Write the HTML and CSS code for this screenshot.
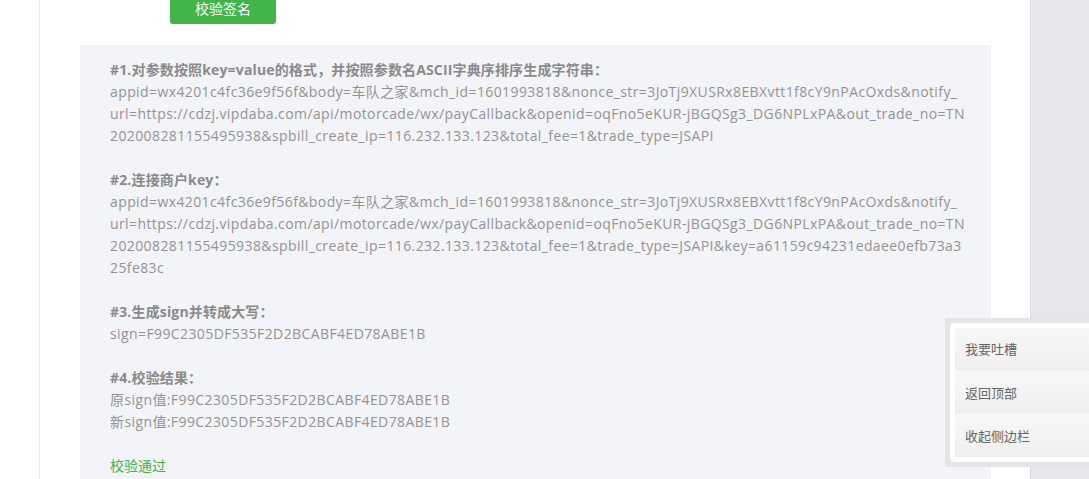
FILE: index.html
```html
<!DOCTYPE html>
<html lang="zh-CN">
<head>
<meta charset="utf-8">
<title>校验签名</title>
<link rel="stylesheet" href="styles.css">
</head>
<body>
<div class="page">
  <div class="gutter"></div>
  <main class="main">
    <button class="btn-verify" type="button">校验签名</button>
    <section class="result">
      <p class="step-title">#1.对参数按照key=value的格式，并按照参数名ASCII字典序排序生成字符串：</p>
      <p class="step-text">appid=wx4201c4fc36e9f56f&amp;body=车队之家&amp;mch_id=1601993818&amp;nonce_str=3JoTj9XUSRx8EBXvtt1f8cY9nPAcOxds&amp;notify_url=https://cdzj.vipdaba.com/api/motorcade/wx/payCallback&amp;openid=oqFno5eKUR-jBGQSg3_DG6NPLxPA&amp;out_trade_no=TN202008281155495938&amp;spbill_create_ip=116.232.133.123&amp;total_fee=1&amp;trade_type=JSAPI</p>
      <p class="blank">&nbsp;</p>
      <p class="step-title">#2.连接商户key：</p>
      <p class="step-text">appid=wx4201c4fc36e9f56f&amp;body=车队之家&amp;mch_id=1601993818&amp;nonce_str=3JoTj9XUSRx8EBXvtt1f8cY9nPAcOxds&amp;notify_url=https://cdzj.vipdaba.com/api/motorcade/wx/payCallback&amp;openid=oqFno5eKUR-jBGQSg3_DG6NPLxPA&amp;out_trade_no=TN202008281155495938&amp;spbill_create_ip=116.232.133.123&amp;total_fee=1&amp;trade_type=JSAPI&amp;key=a61159c94231edaee0efb73a325fe83c</p>
      <p class="blank">&nbsp;</p>
      <p class="step-title">#3.生成sign并转成大写：</p>
      <p class="step-text">sign=F99C2305DF535F2D2BCABF4ED78ABE1B</p>
      <p class="blank">&nbsp;</p>
      <p class="step-title">#4.校验结果：</p>
      <p class="step-text">原sign值:F99C2305DF535F2D2BCABF4ED78ABE1B</p>
      <p class="step-text">新sign值:F99C2305DF535F2D2BCABF4ED78ABE1B</p>
      <p class="blank">&nbsp;</p>
      <p class="step-pass">校验通过</p>
    </section>
  </main>
  <div class="side-strip"></div>
</div>
<aside class="float-bar">
  <ul class="float-list">
    <li class="float-item">我要吐槽</li>
    <li class="float-item">返回顶部</li>
    <li class="float-item">收起侧边栏</li>
  </ul>
</aside>
</body>
</html>
```
FILE: styles.css
```css
html, body {
  margin: 0;
  padding: 0;
  height: 100%;
  overflow: hidden;
}
body {
  background: #fff;
  font-family: "Open Sans", "Noto Sans CJK SC", sans-serif;
  font-size: 14px;
  color: #939393;
}
.page {
  display: flex;
  min-height: 100%;
}
.gutter {
  width: 39px;
  flex: none;
}
.main {
  width: 950px;
  flex: none;
  border-left: 1px solid #e6e6e6;
  padding-left: 40px;
  box-sizing: content-box;
}
.btn-verify {
  display: block;
  margin: -8px 0 0 90px;
  width: 106px;
  height: 32px;
  border: none;
  border-radius: 3px;
  background: #41b549;
  color: #fff;
  font-family: inherit;
  font-size: 14px;
  padding: 0;
}
.result {
  margin-top: 21px;
  width: 855px;
  padding: 14px 26px 20px 30px;
  background: #f3f4f8;
}
.result p {
  margin: 0;
  line-height: 22px;
  word-break: break-all;
}
.step-text {
  letter-spacing: 0.4px;
}
.step-title {
  font-weight: bold;
  color: #8a8a8a;
  letter-spacing: 0.15px;
}
.step-pass {
  color: #3fb34a;
}
.side-strip {
  flex: 1;
  border-left: 1px solid #d6d7db;
  background: #e6e7eb;
}
.float-bar {
  position: fixed;
  right: 0;
  top: 318px;
  width: 139px;
  padding: 5px 0 5px 5px;
  background: #e4e5e9;
}
.float-list {
  list-style: none;
  margin: 0;
  padding: 5px 0 5px 5px;
  background: #fff;
  border-radius: 4px 0 0 4px;
}
.float-item {
  height: 43px;
  line-height: 43px;
  padding-left: 10px;
  font-size: 13px;
  color: #666;
  background: linear-gradient(#f7f7f7, #efefef);
  border-top: 1px solid #fafafa;
  box-sizing: border-box;
}
.float-item:first-child {
  border-top: none;
}
```
